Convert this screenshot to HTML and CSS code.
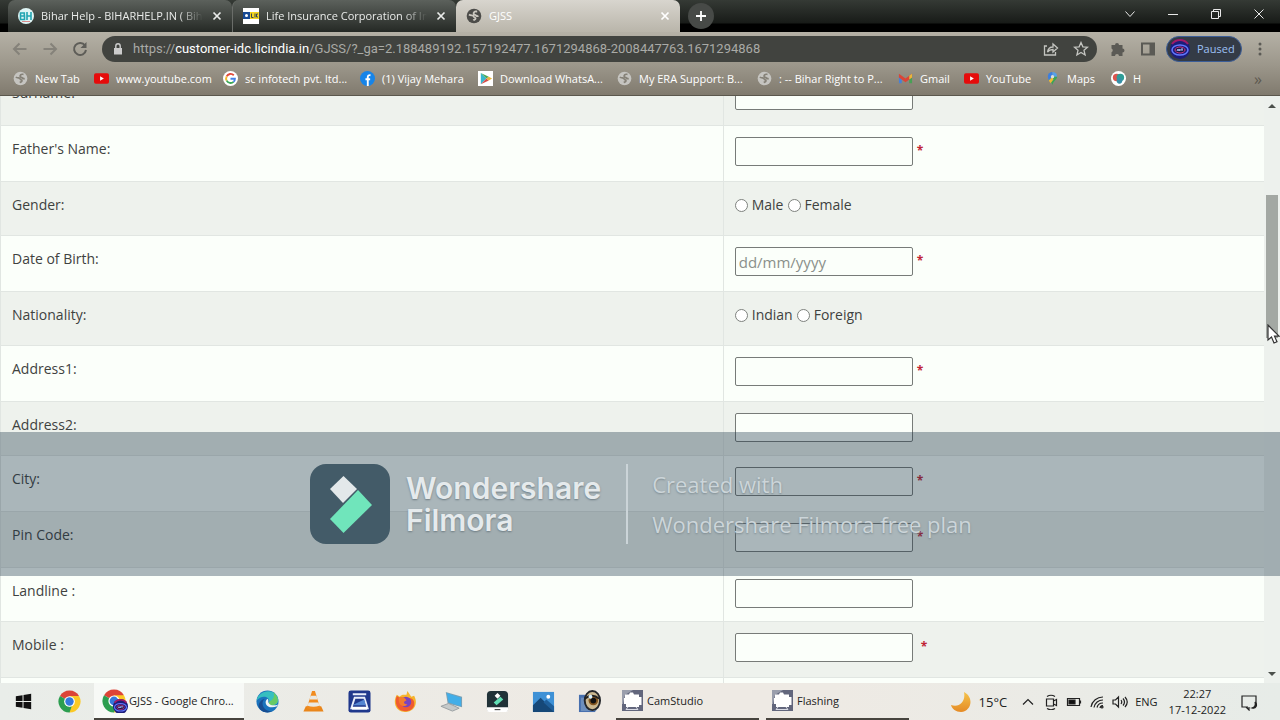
FILE: index.html
```html
<!DOCTYPE html>
<html lang="en">
<head>
<meta charset="utf-8">
<title>GJSS</title>
<link rel="stylesheet" href="styles.css">
</head>
<body>
<svg class="defs" aria-hidden="true">
  <symbol id="globe" viewBox="0 0 16 16"><circle cx="8" cy="8" r="7.3" fill="currentColor"/><path d="M3 6.500c2 1.400 4.300.2 4.600 1.800s2 .8 2 2.200-1.600 1.200-2.300 1.800M12.500 8c-2 .8-2.400-.8-3.600-1.200S7 5.500 8.200 4.200s2-.6 3-.6" fill="none" stroke="var(--cut)" stroke-width="1.800"/></symbol>
  <symbol id="x" viewBox="0 0 10 10"><path d="M1.500 1.500l7 7M8.500 1.500l-7 7" stroke="currentColor" stroke-width="1.700" fill="none"/></symbol>
  <symbol id="youtube" viewBox="0 0 16 16"><rect y="2.500" width="16" height="11" rx="2" fill="#e60b0b"/><path d="M6.500 5.500v5l4-2.500z" fill="#fff"/></symbol>
  <symbol id="chrome" viewBox="0 0 24 24"><path d="M12 12L2.040 6.250A11.500 11.500 0 0 1 21.960 6.250z" fill="#dc4437"/><path d="M12 12L21.960 6.250A11.500 11.500 0 0 1 12 23.500z" fill="#fbc925"/><path d="M12 12L12 23.500A11.500 11.500 0 0 1 2.040 6.250z" fill="#2c9e50"/><path d="M12 6.200h10l-5 9-5 8.300 3-8z" fill="#fbc925"/><path d="M2.040 6.250L7 15l5 3 3-3-3 8.500z" fill="#2c9e50"/><circle cx="12" cy="12" r="5.600" fill="#fff"/><circle cx="12" cy="12" r="4.400" fill="#3479dc"/></symbol>
  <symbol id="badge" viewBox="0 0 20 20"><circle cx="10" cy="10" r="10" fill="#1c1d79"/><path d="M2 5a10 10 0 0 1 16 0" fill="none" stroke="#a01b68" stroke-width="2"/><ellipse cx="10" cy="11" rx="8" ry="5" fill="none" stroke="#6277ff" stroke-width="1.500"/><ellipse cx="10" cy="11" rx="5" ry="3" fill="#1c1840" stroke="#c93683"/><path d="M7 12l1-2 1 2 1-2v2m2-2v2m-1-2h2" stroke="#a9b6ff" fill="none"/></symbol>
  <symbol id="camera" viewBox="0 0 21 21"><path fill="#62667c" d="M0 0h21v21H0z"/><path fill="#9a9eac" d="M0 0h11L3 5 1 14H0z"/><path d="M3 4.500h4l1-2h3l1 2h5V7h2.500v8H17v2H4v-3H2V8h1z" fill="#fff"/><path d="M6 17l-2 2.500h12L14 17" fill="none" stroke="#d8dae4"/></symbol>
</svg>

<header class="browser">
  <div class="tabstrip">
    <div class="tab">
      <svg class="ico" viewBox="0 0 16 16"><circle cx="8" cy="8" r="8" fill="#dff5f5"/><path d="M2.500 5h3.800v3H2.500h4v3.500H2.500zM9 4v8M13 4v8M9 8h4" fill="none" stroke="#22a5b2" stroke-width="1.600"/><path d="M4 13.500h8" stroke="#d88a8a"/></svg>
      <span class="tab-title fade">Bihar Help - BIHARHELP.IN ( Bihar</span>
      <button class="tab-close" aria-label="Close tab"><svg><use href="#x"/></svg></button>
    </div>
    <div class="tab second">
      <svg class="ico" viewBox="0 0 16 16"><path fill="#fff" d="M0 0h16v16H0z"/><path fill="#174a94" d="M0 4h7v7H0z"/><path fill="#f4d51e" d="M7 4h9v7H7z"/><circle cx="3.500" cy="7.500" r="1.500" fill="#fff"/><path d="M8.500 5.500v4h2M12 5.500v4M15 6h-1.500v3H15" stroke="#345" fill="none"/></svg>
      <span class="tab-title fade">Life Insurance Corporation of India</span>
      <button class="tab-close" aria-label="Close tab"><svg><use href="#x"/></svg></button>
    </div>
    <div class="tab active">
      <svg class="ico globe-dark"><use href="#globe"/></svg>
      <span class="tab-title">GJSS</span>
      <button class="tab-close" aria-label="Close tab"><svg><use href="#x"/></svg></button>
    </div>
    <button class="new-tab" aria-label="New tab"><svg viewBox="0 0 14 14"><path d="M7 2v10M2 7h10" stroke="#fff" stroke-width="1.800"/></svg></button>
    <div class="window-buttons">
      <button aria-label="Search tabs"><svg viewBox="0 0 12 12"><path d="M1.500 3.500L6 8.500l4.500-5"/></svg></button>
      <button aria-label="Minimize"><svg viewBox="0 0 12 12"><path d="M1 6.500h10"/></svg></button>
      <button aria-label="Restore"><svg viewBox="0 0 12 12"><path d="M1.500 3.500h7v7h-7zM3.500 3.500v-2h7v7h-2"/></svg></button>
      <button aria-label="Close"><svg viewBox="0 0 12 12"><path d="M1.500 1.500l9 9M10.500 1.500l-9 9"/></svg></button>
    </div>
  </div>

  <div class="toolbar">
    <div class="nav">
      <button aria-label="Back"><svg viewBox="0 0 16 16" class="dim"><path d="M14.500 8H2M7.500 2.500L2 8l5.500 5.500"/></svg></button>
      <button aria-label="Forward"><svg viewBox="0 0 16 16" class="dim"><path d="M1.500 8H14M8.500 2.500L14 8l-5.500 5.500"/></svg></button>
      <button aria-label="Reload"><svg viewBox="0 0 16 16"><path d="M13 4.500A6 6 0 1 0 14 9"/><path d="M14.500 1v6h-6z" fill="#5e5d58" stroke="none"/></svg></button>
    </div>
    <div class="omnibox">
      <svg class="lock" viewBox="0 0 10 12"><path d="M1 5h8v6.500H1z" fill="#ccc"/><path d="M2.800 5V3a2.200 2.200 0 0 1 4.400 0v2" fill="none" stroke="#ccc" stroke-width="1.400"/></svg>
      <a class="url" href="#">https://<span>customer-idc.licindia.in</span>/GJSS/?_ga=2.188489192.157192477.1671294868-2008447763.1671294868</a>
      <button aria-label="Share"><svg viewBox="0 0 16 16"><path d="M4 5H1.500v9h11v-3M4.500 11c.5-3.500 2.500-5 5.500-5V3l4.500 4-4.500 4V8.500c-2.500 0-4 .5-5.500 2.500z"/></svg></button>
      <button aria-label="Bookmark"><svg viewBox="0 0 16 16"><path d="M8 1.500l1.900 4.300 4.600.400-3.500 3.100 1.100 4.700L8 11.500 3.900 14 5 9.300 1.500 6.200l4.600-.400z"/></svg></button>
    </div>
    <div class="actions">
      <button aria-label="Extensions"><svg viewBox="0 0 16 16"><path d="M1.500 4H5a2 2 0 1 1 4 0h3.500v3.500a2 2 0 1 1 0 4V15H9a2 2 0 0 0-4 0H1.500v-3.800a2 2 0 0 0 0-3.700z" fill="#5b5a55"/></svg></button>
      <button aria-label="Side panel"><svg viewBox="0 0 16 16"><path d="M2 2.500h12v11H2z" fill="none" stroke="#5b5a55" stroke-width="2"/><path d="M9.500 2h5v12h-5z" fill="#5b5a55"/></svg></button>
      <button class="profile"><svg><use href="#badge"/></svg>Paused</button>
      <button aria-label="Menu"><svg viewBox="0 0 16 16" fill="#5b5a55"><circle cx="8" cy="3" r="1.500"/><circle cx="8" cy="8" r="1.500"/><circle cx="8" cy="13" r="1.500"/></svg></button>
    </div>
  </div>

  <nav class="bookmarks">
    <a href="#"><svg><use href="#globe"/></svg>New Tab</a>
    <a href="#"><svg><use href="#youtube"/></svg>www.youtube.com</a>
    <a href="#"><svg viewBox="0 0 16 16"><circle cx="8" cy="8" r="8" fill="#fff"/><g fill="none" stroke-width="2"><path d="M11.500 4.500A4.700 4.700 0 0 0 3.900 5.800" stroke="#e14a3b"/><path d="M3.900 5.800a4.700 4.700 0 0 0 0 4.500" stroke="#f2b92b"/><path d="M3.900 10.300a4.700 4.700 0 0 0 7.300 1.300" stroke="#3aa757"/><path d="M11.200 11.600A4.700 4.700 0 0 0 12.700 8.200H8" stroke="#4381e8"/></g></svg>sc infotech pvt. ltd...</a>
    <a href="#"><svg viewBox="0 0 16 16"><circle cx="8" cy="8" r="8" fill="#1684e8"/><path d="M8.300 16V6.500q0-2.300 2.900-2M5.800 8.800h5" stroke="#fff" stroke-width="2" fill="none"/></svg>(1) Vijay Mehara</a>
    <a href="#"><svg viewBox="0 0 16 16"><path fill="#fff" d="M0 0h16v16H0z"/><path d="M3 2v12l6-6z" fill="#38b7cd"/><path d="M3 2l6 6 2.500-2z" fill="#48a85b"/><path d="M3 14l6-6 2.500 2z" fill="#d54d4a"/><path d="M9 8l2.500-2L15 8l-3.500 2z" fill="#e8b63d"/></svg>Download WhatsA...</a>
    <a href="#"><svg><use href="#globe"/></svg>My ERA Support: B...</a>
    <a href="#"><svg><use href="#globe"/></svg>: -- Bihar Right to P...</a>
    <a href="#"><svg viewBox="0 0 16 16"><path d="M1 4v9h3V7z" fill="#4780d8"/><path d="M15 4v9h-3V7z" fill="#48a055"/><path d="M1 3l7 5 7-5v4l-7 5-7-5z" fill="#db4537"/><path d="M12 5l3-2v4l-3 2z" fill="#eab63a"/></svg>Gmail</a>
    <a href="#"><svg><use href="#youtube"/></svg>YouTube</a>
    <a href="#"><svg viewBox="0 0 16 16"><path d="M3 6a5 5 0 0 1 5-5v5l-4 4z" fill="#3c7ee0"/><path d="M8 1a5 5 0 0 1 5 5L8 6z" fill="#55a0e8"/><path d="M13 6c0 3-4 4-5 9-.5-2-2-4-4-5l4-4z" fill="#3ba457"/><path d="M4 10l4-4 1 3-3 4z" fill="#eeb935"/><circle cx="8" cy="6" r="1.800" fill="#ddd"/></svg>Maps</a>
    <a href="#"><svg viewBox="0 0 16 16"><circle cx="8" cy="8" r="8" fill="#fff"/><circle cx="6" cy="7" r="4" fill="#db5750"/><circle cx="10" cy="7" r="4" fill="#2f9d96"/><circle cx="9" cy="10.500" r="3" fill="#3690a8"/></svg>H</a>
    <button class="more" aria-label="More bookmarks">»</button>
  </nav>
</header>

<main class="viewport">
  <form class="page">
    <table class="fields">
      <tr class="tall"><td><label for="surname">Surname:</label></td><td><input type="text" id="surname"></td></tr>
      <tr class="tall"><td><label for="father">Father's Name:</label></td><td><input type="text" id="father"><span class="req">*</span></td></tr>
      <tr><td>Gender:</td><td class="choices"><label><input type="radio" name="gender">Male</label><label><input type="radio" name="gender">Female</label></td></tr>
      <tr class="tall"><td><label for="dob">Date of Birth:</label></td><td><input type="text" id="dob" placeholder="dd/mm/yyyy"><span class="req">*</span></td></tr>
      <tr><td>Nationality:</td><td class="choices"><label><input type="radio" name="nation">Indian</label><label><input type="radio" name="nation">Foreign</label></td></tr>
      <tr class="tall"><td><label for="a1">Address1:</label></td><td><input type="text" id="a1"><span class="req">*</span></td></tr>
      <tr><td><label for="a2">Address2:</label></td><td><input type="text" id="a2"></td></tr>
      <tr class="tall"><td><label for="city">City:</label></td><td><input type="text" id="city"><span class="req">*</span></td></tr>
      <tr class="tall"><td><label for="pin">Pin Code:</label></td><td><input type="text" id="pin"><span class="req">*</span></td></tr>
      <tr><td><label for="land">Landline :</label></td><td><input type="text" id="land"></td></tr>
      <tr class="tall"><td><label for="mobile">Mobile :</label></td><td><input type="text" id="mobile"><span class="req spaced">*</span></td></tr>
      <tr><td></td><td></td></tr>
    </table>
  </form>
  <div class="scrollbar">
    <svg viewBox="0 0 8 5"><path d="M0 5l4-4 4 4z"/></svg>
    <div class="track"><div class="thumb"></div></div>
    <svg viewBox="0 0 8 5"><path d="M0 0l4 4 4-4z"/></svg>
  </div>
</main>

<footer class="taskbar">
  <div class="apps">
    <button aria-label="Start"><svg viewBox="0 0 24 24"><path d="M4 6.500l7-1V11.500H4zM12 5.300l8-1.300v7.500h-8zM4 12.500h7v6l-7-1zM12 12.500h8V20l-8-1.300z" fill="#111"/></svg></button>
    <button aria-label="Google Chrome"><svg><use href="#chrome"/></svg></button>
  </div>
  <button class="task current"><svg class="big" viewBox="0 0 26 24"><use href="#chrome" width="24" height="24"/><use href="#badge" x="11" y="10" width="15" height="15"/></svg><span>GJSS - Google Chro...</span></button>
  <div class="apps middle">
    <button aria-label="Edge"><svg viewBox="0 0 24 24"><circle cx="12" cy="12" r="11.500" fill="#1a73bd"/><path d="M.6 11C2 2 15-3 22 6c3 6 0 10-5 10-4 0-4-2-3-4C14 6 5 5 .6 11z" fill="#36bfc0"/><path d="M18 2c6 5 7 13-1 14-4 0-4-2-3-4 4-1 6-6 4-10z" fill="#67ca65"/><path d="M9 9c-5 5-1 14 8 13-5 3-12 1-14-4-1-4 2-8 6-9z" fill="#174d91"/><path d="M12 9c-5 4 0 12 10 8l1-2c-4 2-9 1-10-2-.5-2 .5-3-1-4z" fill="#eef4f4"/></svg></button>
    <button aria-label="VLC"><svg viewBox="0 0 24 24"><path d="M4 17h16l2.500 5.500h-21z" fill="#e9861b"/><path d="M10.500 1h3L19 19q-7 3-14 0z" fill="#f18b1e"/><path d="M9 6h6l1.200 4H7.800zM6.800 13h10.400l1 3.500q-6.200 2-12.400 0z" fill="#e9e9e4"/></svg></button>
    <button aria-label="Scanner"><svg viewBox="0 0 24 24"><rect x=".5" y=".5" width="23" height="23" rx="2.500" fill="#20388c"/><path d="M5 4.500h14M7 8h10l3.500 11h-17z" fill="none" stroke="#e8edfa" stroke-width="2"/><path d="M6 15l11-5 1.500 6H6z" fill="#5486d2"/><path d="M4 19h16" stroke="#fff" stroke-width="3"/></svg></button>
    <button aria-label="Firefox"><svg viewBox="0 0 24 24"><path d="M3 5l3 2c2-3 5-2 7-2l1-4 4 6 3-1c5 9-1 17-9 17C2 23-2 13 3 5z" fill="#f6b32c"/><path d="M3 6c2 3 7 1 9 3 7-2 10 2 9 7-1 5-7 7-11 6C3 21 0 13 3 6z" fill="#ef5b30"/><circle cx="12.500" cy="12.500" r="5.500" fill="#7944bd"/><path d="M5 8c5-2 7 1 8 3-4 1-3 4 1 4-4 4-10 1-9-7z" fill="#f27b2d"/></svg></button>
    <button aria-label="Computer"><svg viewBox="0 0 24 24"><path d="M6 2l17 5v11L8 14z" fill="#79a0b5"/><path d="M7 3l15 5v9L9 13z" fill="#42aee8"/><path d="M1 17l8-3 11 5-7 3z" fill="#c5c9c9" stroke="#999fa1"/></svg></button>
    <button aria-label="Filmora"><svg viewBox="0 0 24 24"><rect x="1" y="1" width="22" height="22" rx="4" fill="#213238"/><path d="M9 6l3-3 3 3-3 3z" fill="#fff"/><path d="M8 13l7-6 3 3-7 6z" fill="#61dfb5"/><path d="M1 18h22v2q0 3-3 3H4q-3 0-3-3z" fill="#fff"/><path d="M9 20.500h6" stroke="#222"/></svg></button>
    <button aria-label="Photos"><svg viewBox="0 0 24 24"><path d="M1 2h22v21H1z" fill="#3e91d6"/><path d="M1 16l8-8 14 14v1H1z" fill="#164878"/><path d="M12 13l3-3 8 7v6z" fill="#1f5f9b"/><circle cx="17" cy="7" r="2" fill="#fff"/></svg></button>
    <button aria-label="Viewer"><svg viewBox="0 0 24 24"><path d="M1 5h17v18H1z" fill="#466fae"/><path d="M3 8h16v14H3z" fill="#6d8fbd"/><ellipse cx="15" cy="11" rx="8" ry="10" fill="#cbb890" stroke="#24272b" stroke-width="2"/><circle cx="16" cy="11" r="5" fill="#855721"/><circle cx="16" cy="11" r="3" fill="#111"/><path d="M7 9q8-6 15 0" fill="none" stroke="#222" stroke-width="2"/><circle cx="13" cy="7" r="2" fill="#d7f0ff"/></svg></button>
  </div>
  <button class="task"><svg><use href="#camera"/></svg><span>CamStudio</span></button>
  <button class="task"><svg><use href="#camera"/></svg><span>Flashing</span></button>
  <div class="tray">
    <svg class="moon" viewBox="0 0 22 22"><defs><linearGradient id="mg" x2="0" y2="1"><stop stop-color="#f5c34a"/><stop offset="1" stop-color="#e58a25"/></linearGradient></defs><path d="M14 1c10 5 8 19-3 20C6 21 2 18 1 14c8 3 15-3 13-13z" fill="url(#mg)"/></svg>
    <span class="temp">15°C</span>
    <svg viewBox="0 0 16 16"><path d="M3 10.500l5-5 5 5"/></svg>
    <svg viewBox="0 0 16 16"><path d="M3.500 5h7v7h-7zM10.500 7l3-1.500v6l-3-1.500M4 2.500q4-2.500 8 0M4 14.500q4 2.500 8 0"/></svg>
    <svg viewBox="0 0 16 16"><path d="M1.500 4.500h12v7h-12zM14.500 6.500v3"/><path d="M3 6h6v4H3z" fill="#111"/></svg>
    <svg viewBox="0 0 16 16"><path d="M2 13A12 12 0 0 1 14 3M5 13.500A9 9 0 0 1 14 6M8 13.500A6 6 0 0 1 14 9M11 14a3 3 0 0 1 3-2.500"/><circle cx="13" cy="13" r="1"/></svg>
    <svg viewBox="0 0 16 16"><path d="M1 6h2.500l3-3v10l-3-3H1zM9 6q1.500 2 0 4M11 4.500q3 3.500 0 7M13 3q4.500 5 0 10"/></svg>
    <span>ENG</span>
    <time class="clock"><span>22:27</span><span>17-12-2022</span></time>
    <button aria-label="Notifications"><svg viewBox="0 0 18 18"><path d="M8 14H2V3h14v8M6 14l3 3v-3"/><path d="M15 9c3 3 1 7-3 6 3-1 4-3 3-6z" fill="#222"/></svg></button>
  </div>
</footer>

<div class="watermark">
  <svg class="logo" viewBox="0 0 80 80"><rect width="80" height="80" rx="16" fill="#435b68"/><path d="M20 25L33.500 12 47 25 33 39z" fill="#e3e8ea"/><path d="M48 26l14 15-28.500 28L20 55z" fill="#70e5bb"/></svg>
  <div class="brand">Wondershare<br>Filmora</div>
  <div class="plan">Created with<br>Wondershare Filmora free plan</div>
</div>
<svg class="cursor" viewBox="0 0 14 20"><path d="M1 1v15l3.500-3 2.500 6 3-1.300-2.500-5.500H12z" fill="#fff" stroke="#333" stroke-width="1.200"/></svg>
</body>
</html>
```
FILE: styles.css
```css
* { box-sizing: border-box; }
body {
  margin: 0;
  height: 100vh;
  position: relative;
  display: flex;
  flex-direction: column;
  overflow: hidden;
  font: 11px/16px "Open Sans", "Noto Sans", sans-serif;
  color: #3f423f;
  background: #fbfffa;
}
button { border: 0; padding: 0; background: none; font: inherit; color: inherit; display: flex; align-items: center; justify-content: center; }
a { color: inherit; text-decoration: none; }
svg { flex: none; display: block; width: 16px; height: 16px; }
.defs { position: absolute; width: 0; height: 0; }

/* Tabs */
.browser { flex: none; color: #fff; border-bottom: 1px solid #5b574d; background: #807a6e; }
.tabstrip { display: flex; height: 32px; padding-left: 8px; background: linear-gradient(#353a35, #181b18 23px, #000 24px); }
.tab { flex: 0 1 224px; min-width: 0; display: flex; align-items: center; gap: 7px; padding: 0 8px 0 10px; background: linear-gradient(#5c615c, #252925); border-radius: 7px 7px 0 0; color: #e9ebe9; }
.tab.second { border-left: 1px solid #6a6d69; }
.tab.active { background: linear-gradient(#d8d5ce, #b9b5aa); color: #fff; }
.tab-title { flex: 1; min-width: 0; overflow: hidden; white-space: nowrap; }
.fade { mask-image: linear-gradient(to right, #000 85%, transparent); }
.tab-close { width: 14px; height: 16px; }
.tab-close svg { width: 10px; height: 10px; }
.globe-dark { color: #4c4c49; --cut: #cbc8c0; }
.new-tab { width: 26px; height: 26px; margin: 3px 8px; border-radius: 50%; background: #474a47; }
.new-tab svg { width: 14px; height: 14px; }
.window-buttons { margin-left: auto; display: flex; height: 27px; }
.window-buttons button { width: 43px; }
.window-buttons svg { width: 12px; height: 12px; fill: none; stroke: #e8e8e8; }

/* Toolbar */
.toolbar { display: flex; align-items: center; height: 33px; padding: 0 12px; background: linear-gradient(#b5b1a6, #9c978b); }
.nav { display: flex; gap: 14px; margin-right: 14px; }
.nav svg { fill: none; stroke: #5e5d58; stroke-width: 2; }
.nav svg.dim { stroke: #85827a; }
.omnibox { flex: 1; min-width: 0; display: flex; align-items: center; gap: 14px; height: 26px; padding: 0 8px 0 11px; border-radius: 13px; background: #41433f; }
.lock { width: 10px; height: 12px; }
.url { flex: 1; min-width: 0; overflow: hidden; white-space: nowrap; font: 13px/20px Roboto, sans-serif; color: #a9aaa6; margin-left: -4px; }
.url span { color: #fff; }
.omnibox button svg { fill: none; stroke: #c4c5c1; stroke-width: 1.300; }
.actions { display: flex; align-items: center; gap: 14px; margin-left: 13px; }
.profile { gap: 7px; height: 26px; width: 76px; margin: 0 -4px; border-radius: 13px; background: #343b46; border: 1px solid #3b5d98; color: #9dc0f5; justify-content: flex-start; padding-left: 3px; }
.profile svg { width: 20px; height: 20px; }

/* Bookmarks */
.bookmarks { display: grid; grid-template-columns: 81px 129px 137px 118px 139px 140px 141px 66px 81px 66px 1fr 20px; height: 30px; padding: 0 12px 3px 13px; align-items: center; background: linear-gradient(#9c978b, #807a6e); }
.bookmarks a { display: flex; align-items: center; gap: 7px; white-space: nowrap; }
.bookmarks a svg { width: 15px; height: 15px; color: #c5c4c0; --cut: #858177; }
.more { font-size: 16px; color: #5d594f; }

/* Form */
.viewport { flex: 1; min-height: 0; display: flex; }
.page { flex: 1; min-width: 0; overflow: hidden; font-size: 14px; line-height: 24px; }
.fields { width: 100%; margin-top: -27px; border-collapse: collapse; table-layout: fixed; }
.fields tr { height: 54px; background: #fbfffa; }
.fields tr.tall { height: 56px; }
.fields tr:nth-child(odd) { background: #eef2ed; }
.fields td { padding: 11px 11px 0; vertical-align: top; border-top: 1px solid #e1e6e2; }
.fields td:first-child { width: 57.2%; border-right: 1px solid #e1e6e2; border-left: 1px solid #e1e6e2; }
.fields input[type="text"] { float: left; width: 178px; height: 29px; padding: 0 3px; border: 1px solid #777b78; border-radius: 2px; background: #fbfffa; font: inherit; font-size: 15px; color: #3f423f; }
.fields input::placeholder { color: #8a8f8a; }
.req { margin-left: 4px; font-size: 12px; line-height: 28px; color: #c02435; font-weight: bold; }
.req.spaced { margin-left: 8px; }
.choices label { display: inline-flex; align-items: center; gap: 4px; margin-right: 4px; }
.choices input { appearance: none; width: 13px; height: 13px; margin: 0; border: 1px solid #7e827e; border-radius: 50%; background: #fff; }
.scrollbar { width: 16px; display: flex; flex-direction: column; align-items: center; padding: 7px 0 6px; background: #edf1ed; }
.scrollbar svg { width: 8px; height: 5px; fill: #4c504c; }
.track { flex: 1; align-self: stretch; padding: 87px 2px 0; }
.thumb { height: 30%; min-height: 142px; background: #a3a8a3; }

/* Taskbar */
.taskbar { flex: none; display: flex; height: 37px; color: #222; background: linear-gradient(90deg, #e9ede9, #eeeae4 45%, #eeeae4 65%, #e7ece8); }
.apps { display: flex; align-items: center; }
.apps button { width: 46px; height: 37px; }
.apps svg { width: 23px; height: 23px; }
.apps.middle { margin-right: 4px; }
.task { flex: 0 1 143px; min-width: 0; justify-content: flex-start; gap: 4px; padding-left: 6px; border-bottom: 2px solid #47443e; margin-right: 7px; white-space: nowrap; }
.task svg { width: 21px; height: 21px; }
.task svg.big { width: 26px; height: 24px; }
.task.current { flex-basis: 150px; gap: 1px; padding-left: 8px; margin: 0 0 0 2px; background: #f7f9f6; }
.tray { margin-left: auto; display: flex; align-items: center; gap: 7px; padding-right: 22px; }
.tray svg { fill: none; stroke: #222; stroke-width: 1.200; }
.tray .moon { width: 22px; height: 22px; stroke: none; }
.temp { font-size: 13px; margin-right: 6px; }
.clock { display: flex; flex-direction: column; align-items: center; margin: 0 7px 0 4px; }
.tray button svg { width: 18px; height: 18px; }

/* Banner over the page */
.watermark { position: absolute; left: 0; right: 0; top: 60%; height: 20%; display: flex; align-items: center; padding-left: 310px; background: rgba(27, 53, 72, 0.36); pointer-events: none; }
.logo { width: 80px; height: 80px; }
.brand { margin-left: 16px; padding-right: 25px; font: 600 30px/32px Inter, sans-serif; color: #e5eaec; text-shadow: 0 1px 2px #6d7b82; }
.plan { display: flex; align-items: center; height: 80px; padding-left: 24px; border-left: 2px solid #cbd4d8; font-size: 22px; line-height: 40px; color: #ccd5d9; text-shadow: 0 1px 2px #7d8a90; }
.cursor { position: absolute; left: 1267px; top: 324px; width: 14px; height: 20px; }
```
